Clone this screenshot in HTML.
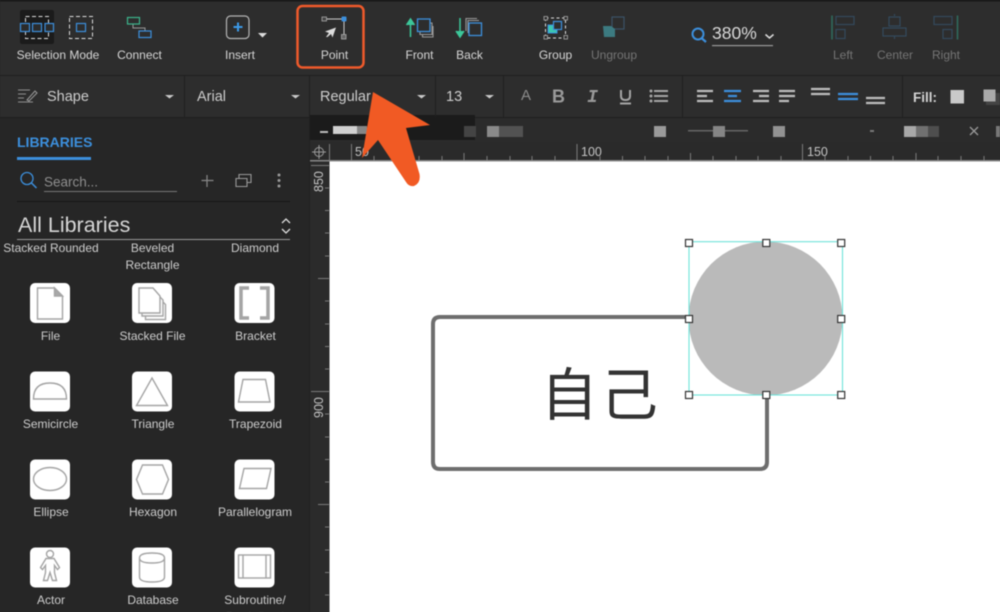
<!DOCTYPE html>
<html><head><meta charset="utf-8">
<style>
html,body{margin:0;padding:0;background:#262626}
#r{position:relative;width:1000px;height:612px;overflow:hidden;background:#262626;font-family:"Liberation Sans","Noto Sans CJK SC",sans-serif}
svg{position:absolute;left:0;top:0;filter:blur(.4px)}
svg text{font-family:"Liberation Sans","Noto Sans CJK SC",sans-serif}
.l{font-size:12px;fill:#cdcdcd;text-anchor:middle}
.t{font-size:12px;fill:#d6d6d6;text-anchor:middle}
.d{font-size:12px;fill:#757575;text-anchor:middle}
.f{font-size:14.5px;fill:#cdcdcd}
.ic{fill:#fff}
.sh{fill:none;stroke:#a4a4a4;stroke-width:1.4}
</style></head><body><div id="r">
<svg width="1012" height="624" viewBox="0 0 1012 624" xmlns="http://www.w3.org/2000/svg">
<!-- backgrounds -->
<rect width="1012" height="624" fill="#262626"/>
<rect width="1012" height="75" fill="#2d2d2d"/>
<rect width="1012" height="1.5" fill="#161616"/>
<rect y="75" width="1012" height="1" fill="#1f1f1f"/>
<rect y="76" width="1012" height="41" fill="#2d2d2d"/>
<rect y="117" width="1012" height="1" fill="#1f1f1f"/>
<rect x="310" y="118" width="702" height="24" fill="#2b2b2b"/>
<rect x="310" y="142" width="702" height="19" fill="#2a2a2a"/>
<rect x="310" y="161" width="19" height="463" fill="#2b2b2b"/>
<rect x="309" y="118" width="1" height="506" fill="#212121"/>
<!-- tab strip -->
<g>
<rect x="310" y="115" width="165" height="25" fill="#1b1b1b"/>
<rect x="333" y="126" width="24" height="8" fill="#d0d0d0"/><rect x="357" y="126" width="10" height="8" fill="#868686"/>
<rect x="320" y="131" width="8" height="2" fill="#bbb"/>
<rect x="464" y="126" width="12" height="11" fill="#444"/><rect x="487" y="126" width="12" height="11" fill="#8a8a8a"/><rect x="499" y="126" width="24" height="11" fill="#525252"/>
<rect x="654" y="126" width="12" height="11" fill="#9a9a9a"/>
<rect x="688" y="130" width="60" height="1.5" fill="#666"/>
<rect x="713" y="126" width="12" height="11" fill="#858585"/>
<rect x="773" y="126" width="12" height="11" fill="#929292"/>
<rect x="870" y="130" width="4" height="2" fill="#777"/>
<rect x="904" y="126" width="12" height="11" fill="#a8a8a8"/><rect x="916" y="126" width="12" height="11" fill="#707070"/><rect x="928" y="126" width="11" height="11" fill="#4e4e4e"/>
<path d="M970 127l8 8M978 127l-8 8" stroke="#999" stroke-width="1.300"/>
<rect x="996" y="126" width="4" height="11" fill="#777"/>
</g>
<!-- rulers -->
<g stroke="#7a7a7a" stroke-width="1" fill="none">
<path d="M329.500 144v16M351.500 144v16M577 144v16M802.500 144v16"/>
<path d="M374 156v4M396.500 156v4M419 156v4M442 156v4M464 153v7M487 156v4M510 156v4M532 156v4M555 156v4M600 156v4M622.500 156v4M645 156v4M668 156v4M690.500 153v7M713 156v4M736 156v4M758 156v4M781 156v4M825 156v4M848 156v4M870.500 156v4M893 156v4M916 153v7M938 156v4M961 156v4M984 156v4"/>
<path d="M311 165.500h18M318 278.500h11M311 391.500h18M318 504.500h11"/>
<path d="M325 188h4M325 210.500h4M325 233h4M325 256h4M325 301h4M325 324h4M325 346.500h4M325 369h4M325 414h4M325 437h4M325 459.500h4M325 482h4M325 527h4M325 550h4M325 572.500h4M325 595h4"/>
</g>
<rect x="310" y="160" width="702" height="1.500" fill="#888"/>
<g fill="none" stroke="#9a9a9a" stroke-width="1"><circle cx="319" cy="152" r="4.500"/><path d="M319 145v14M312 152h14"/></g>
<text x="355" y="156" font-size="12.500" fill="#c4c4c4">50</text>
<text x="581" y="156" font-size="12.500" fill="#c4c4c4">100</text>
<text x="807" y="156" font-size="12.500" fill="#c4c4c4">150</text>
<text transform="translate(323,192) rotate(-90)" font-size="12.500" fill="#c4c4c4">850</text>
<text transform="translate(323,418) rotate(-90)" font-size="12.500" fill="#c4c4c4">900</text>
<!-- canvas -->
<rect x="329.500" y="161.500" width="683" height="463" fill="#fff"/>
<path d="M690 317H440Q433 317 433 324V462Q433 469 440 469H760Q767 469 767 462V395" fill="none" stroke="#6e6e6e" stroke-width="4"/>
<text x="600.750" y="415" font-size="57" fill="#333" text-anchor="middle" style="font-family:'Noto Sans CJK SC',sans-serif;font-weight:400;letter-spacing:3px">自己</text>
<circle cx="765.500" cy="318.500" r="77" fill="#bababa"/>
<rect x="689" y="241.700" width="153.500" height="153.300" fill="none" stroke="#6fe3da" stroke-width="1.100"/>
<g fill="#fff" stroke="#333" stroke-width="1.200">
<rect x="685.500" y="239.500" width="7" height="7"/><rect x="762.800" y="239.500" width="7" height="7"/><rect x="837.700" y="239.500" width="7" height="7"/>
<rect x="685.500" y="315.500" width="7" height="7"/><rect x="837.700" y="315.500" width="7" height="7"/>
<rect x="685.500" y="391.500" width="7" height="7"/><rect x="762.800" y="391.500" width="7" height="7"/><rect x="837.700" y="391.500" width="7" height="7"/>
</g>
<!-- toolbar -->
<g>
<rect x="20" y="10" width="34" height="34" rx="2" fill="#1b1b1b"/>
<rect x="25.500" y="16.500" width="23" height="22" fill="none" stroke="#ddd" stroke-width="1" stroke-dasharray="4 2.500"/>
<g fill="#2b2b2b" stroke="#3c8fdc" stroke-width="1.200"><rect x="20.500" y="23.500" width="9" height="8"/><rect x="32.500" y="23.500" width="9" height="8"/><rect x="45" y="23.500" width="8.500" height="8"/></g>
<rect x="69.500" y="16.500" width="23" height="22" fill="none" stroke="#ddd" stroke-width="1" stroke-dasharray="4 2.500"/>
<rect x="76.500" y="23.500" width="9" height="8" fill="none" stroke="#3c8fdc" stroke-width="1.200"/>
<path d="M133 24v4h12v3" fill="none" stroke="#999" stroke-width="1"/>
<rect x="127.500" y="17.500" width="12" height="6.500" fill="none" stroke="#3cb58c" stroke-width="1.200"/>
<rect x="139" y="31" width="12" height="6.500" fill="none" stroke="#3c8fdc" stroke-width="1.200"/>
<rect x="226.500" y="16" width="22.500" height="22.500" rx="4" fill="none" stroke="#b5b5b5" stroke-width="1.200"/>
<path d="M238 22.500v9M233.500 27h9" stroke="#3c9ae8" stroke-width="2"/>
<path d="M258 33h9l-4.500 4.500z" fill="#ddd"/>
<path d="M325 19h19v18" fill="none" stroke="#ccc" stroke-width="1"/>
<rect x="322" y="17" width="4.500" height="4" fill="#444" stroke="#aaa" stroke-width=".8"/>
<rect x="341.500" y="16.500" width="5" height="5" rx="1" fill="#3c8fdc"/>
<rect x="341.500" y="34.500" width="4.500" height="4.500" fill="#666" stroke="#aaa" stroke-width=".8"/>
<path d="M336 27.500l-11 4 4 1.500-3 4 1.500 0 3.500-3 1.500 3.500z" fill="#ddd"/>
<rect x="297.500" y="6" width="66" height="61.500" rx="5" fill="none" stroke="#ef5a2b" stroke-width="2.500"/>
<path d="M410.500 37V21M406.500 25l4-6 4 6" fill="#3cc79a" stroke="#3cc79a" stroke-width="1.500"/>
<path d="M420 31.500v3h12V23h-2M422.500 34.500v2.500h10.500V26" fill="none" stroke="#9a9a9a" stroke-width="1.100"/>
<rect x="417.500" y="19" width="12.500" height="12.500" fill="none" stroke="#3c8fdc" stroke-width="1.300"/>
<path d="M460 18v15M456 31l4 6 4-6" fill="#3cc79a" stroke="#3cc79a" stroke-width="1.500"/>
<path d="M466 31v-12.500h11M468 33V20.500h11" fill="none" stroke="#9a9a9a" stroke-width="1.100"/>
<rect x="469" y="23" width="12.500" height="12.500" fill="#2d2d2d" stroke="#3c8fdc" stroke-width="1.300"/>
<rect x="545.500" y="18" width="20" height="20" fill="none" stroke="#ddd" stroke-width="1" stroke-dasharray="3 2.500"/>
<g fill="#2d2d2d" stroke="#aaa" stroke-width=".8"><rect x="544" y="16.500" width="3.500" height="3.500"/><rect x="564" y="16.500" width="3.500" height="3.500"/><rect x="544" y="35.500" width="3.500" height="3.500"/><rect x="564" y="35.500" width="3.500" height="3.500"/></g>
<rect x="548" y="25" width="9" height="8" fill="#3cc8b0" stroke="#3c8fdc" stroke-width="1"/>
<rect x="553.500" y="21.500" width="8" height="8" fill="#2d2d2d" stroke="#3c8fdc" stroke-width="1.200"/>
<rect x="612" y="17" width="12" height="12" fill="none" stroke="#3b5266" stroke-width="1.200"/>
<path d="M603 26l8 0 4 3 0 8-11 0z" fill="#3c7a80"/>
<circle cx="698" cy="34" r="5.500" fill="none" stroke="#3c8fdc" stroke-width="2"/><path d="M702 38.500l4 3.500" stroke="#3c8fdc" stroke-width="2.200"/>
<path d="M765.500 34.500l4 3.500 4-3.500" fill="none" stroke="#ddd" stroke-width="1.500"/>
<rect x="712" y="45" width="61" height="1.200" fill="#999"/>
<!-- align -->
<g fill="none" stroke="#33495c" stroke-width="1.200">
<rect x="836" y="16.500" width="18" height="8"/><rect x="836" y="29.500" width="9" height="9"/>
<rect x="883" y="28" width="23" height="8"/><rect x="889" y="17" width="11" height="9"/><path d="M894.500 14v2M894.500 36v3"/>
<rect x="934" y="16.500" width="18" height="8"/><rect x="943" y="29.500" width="9" height="9"/>
</g>
<path d="M832 15.500v24M957.500 15.500v24" stroke="#2f6a5c" stroke-width="1.600"/>
<!-- format icons -->
<path d="M18 90h12M18 94h8M18 98h6M18 102h15" stroke="#8f8f8f" stroke-width="1"/>
<path d="M27 100l8-9 2 2-8 8z" fill="none" stroke="#9a9a9a" stroke-width="1"/>
<g fill="#c9c9c9"><path d="M165 95h9l-4.500 3.500zM291 95h9l-4.500 3.500zM417 95h9l-4.500 3.500zM485 95h9l-4.500 3.500z"/></g>
<g fill="#1f1f1f"><rect x="184" y="76" width="1" height="41"/><rect x="309" y="76" width="1" height="41"/><rect x="435" y="76" width="1" height="41"/><rect x="503" y="76" width="1" height="41"/><rect x="682" y="76" width="1" height="41"/><rect x="902" y="76" width="1" height="41"/></g>
<g stroke="#bdbdbd" stroke-width="2.200" fill="none">
<path d="M697 91h16M697 96h10M697 101h16"/>
<path d="M753 91h16M759 96h10M753 101h16"/>
<path d="M779 91h16M779 96h16M779 101h10"/>
<path d="M811 89h19M811 94h19"/>
<path d="M866 98h19M866 103h19"/>
</g>
<g stroke="#3c8fdc" stroke-width="2.200" fill="none">
<path d="M724 91h17M728 96h9M724 101h17"/>
<path d="M838 94h20M838 99h20"/>
</g>
<g fill="none" stroke="#a5a5a5" stroke-width="2">
<path d="M621 90v6q0 4 4.500 4t4.500-4v-6M620 103.500h11"/>
<path d="M654 91h14M654 96h14M654 101h14"/>
</g>
<g fill="#a5a5a5"><circle cx="651" cy="91" r="1.500"/><circle cx="651" cy="96" r="1.500"/><circle cx="651" cy="101" r="1.500"/></g>
<rect x="950.500" y="90" width="13.500" height="13.500" fill="#c9c9c9"/>
<rect x="986" y="93" width="14" height="12" fill="#444"/>
<rect x="983.500" y="89.500" width="12" height="12" fill="#aaa"/>
</g>
<g>
<text class="t" x="58" y="59">Selection Mode</text>
<text class="t" x="139.500" y="59">Connect</text>
<text class="t" x="240" y="59">Insert</text>
<text class="t" x="334.500" y="59">Point</text>
<text class="t" x="419.500" y="59">Front</text>
<text class="t" x="469.500" y="59">Back</text>
<text class="t" x="555.500" y="59">Group</text>
<text class="d" x="614" y="59">Ungroup</text>
<text class="d" x="843" y="59">Left</text>
<text class="d" x="895" y="59">Center</text>
<text class="d" x="946" y="59">Right</text>
<text x="712" y="39" font-size="17.500" fill="#d8d8d8">380%</text>
<text class="f" x="47" y="101">Shape</text>
<text class="f" x="197" y="101">Arial</text>
<text class="f" x="320" y="101">Regular</text>
<text class="f" x="446" y="101">13</text>
<text x="526" y="100" font-size="15" fill="#8c8c8c" text-anchor="middle">A</text>
<text x="558.500" y="102.500" font-size="18" font-weight="700" fill="#9a9a9a" text-anchor="middle">B</text>
<text x="592.500" y="102" font-size="18" font-style="italic" font-weight="700" fill="#9a9a9a" text-anchor="middle" style="font-family:'Liberation Mono',monospace">I</text>
<text x="913" y="102" font-size="13.500" font-weight="700" fill="#d4d4d4">Fill:</text>
</g>
<!-- sidebar -->
<text x="17" y="147" font-size="14" font-weight="700" fill="#3c8fdc">LIBRARIES</text>
<rect x="17" y="157" width="74" height="3" fill="#3c8fdc"/>
<g>
<circle cx="27" cy="178.500" r="6" fill="none" stroke="#3c8fdc" stroke-width="1.300"/><path d="M31.500 183l5 5" stroke="#3c8fdc" stroke-width="1.500"/>
<rect x="44" y="191" width="133" height="1" fill="#777"/>
<path d="M207 175v12M201.500 180.500h12" stroke="#888" stroke-width="1.200"/>
<path d="M236 178.500h11v8h-11zM239 178v-3.500h12v8h-3.500" fill="none" stroke="#999" stroke-width="1.100"/>
<g fill="#999"><circle cx="279" cy="175" r="1.500"/><circle cx="279" cy="180.500" r="1.500"/><circle cx="279" cy="186" r="1.500"/></g>
<rect x="17" y="201" width="273" height="1" fill="#161616"/>
<rect x="17" y="239" width="273" height="1" fill="#999"/>
<path d="M282 223l4-4 4 4M282 229l4 4 4-4" fill="none" stroke="#ddd" stroke-width="1.300"/>
</g>
<text x="44" y="186.500" font-size="13.500" fill="#8e8e8e">Search...</text>
<text x="18" y="232" font-size="21.500" fill="#d6d6d6">All Libraries</text>
<g>
<text class="l" x="51" y="252">Stacked Rounded</text>
<text class="l" x="152.500" y="252">Beveled</text>
<text class="l" x="152.500" y="269">Rectangle</text>
<text class="l" x="255" y="252">Diamond</text>
<text class="l" x="50.500" y="340">File</text>
<text class="l" x="152.500" y="340">Stacked File</text>
<text class="l" x="255.500" y="340">Bracket</text>
<text class="l" x="50.500" y="428">Semicircle</text>
<text class="l" x="153" y="428">Triangle</text>
<text class="l" x="255.500" y="428">Trapezoid</text>
<text class="l" x="51" y="516">Ellipse</text>
<text class="l" x="153" y="516">Hexagon</text>
<text class="l" x="255" y="516">Parallelogram</text>
<text class="l" x="51" y="604">Actor</text>
<text class="l" x="153" y="604">Database</text>
<text class="l" x="255" y="604">Subroutine/</text>
<text class="l" x="255" y="621">Predefined</text>
</g>
<g>
<g class="ic">
<rect x="30" y="283" width="40" height="40" rx="5"/><rect x="132" y="283" width="40" height="40" rx="5"/><rect x="234.500" y="283" width="40" height="40" rx="5"/>
<rect x="30" y="371.500" width="40" height="40" rx="5"/><rect x="132" y="371.500" width="40" height="40" rx="5"/><rect x="234.500" y="371.500" width="40" height="40" rx="5"/>
<rect x="30" y="459.500" width="40" height="40" rx="5"/><rect x="132" y="459.500" width="40" height="40" rx="5"/><rect x="234.500" y="459.500" width="40" height="40" rx="5"/>
<rect x="30" y="547.500" width="40" height="40" rx="5"/><rect x="132" y="547.500" width="40" height="40" rx="5"/><rect x="234.500" y="547.500" width="40" height="40" rx="5"/>
</g>
<g class="sh">
<path d="M37.500 288h17l8 8v23h-25z"/><path d="M54.500 288l8 8h-8z" fill="#a8a8a8"/>
<path d="M139 288h14l7 8v17h-21z"/><path d="M160 297l3 3v16h-21v-3M163 302l2.500 2.500v15h-20v-3"/>
<path d="M249 288h-8v30h8M260 288h8v30h-8" stroke-width="3.500"/>
<path d="M33.500 399h33q0-16-16.500-16t-16.500 16z"/>
<path d="M152 378l15.500 27.500h-31z"/>
<path d="M243 379.500h22.500l4.500 22.500h-31.500z"/>
<ellipse cx="50" cy="479" rx="16.500" ry="11.500"/>
<path d="M142.500 465h20l6 14.500-6 14.500h-20l-6-14.500z"/>
<path d="M244 468.500h27l-4.500 20h-27z"/>
<circle cx="50" cy="554" r="3.500"/>
<path d="M46 558.500h8l5.500 9-2 2-3-4v7l2 8h-4l-2.500-8-2.500 8h-4l2-8v-7l-3 4-2-2z"/>
<path d="M139.500 558v19q0 5 12.500 5t12.500-5v-19M139.500 558q0-5 12.500-5t12.500 5-12.500 5-12.500-5z"/>
<rect x="238.500" y="555" width="32" height="23"/><path d="M243 555v23M266 555v23"/>
</g>
</g>
<!-- big arrow -->
<path d="M373 92L430 125L406 128L419.500 174Q421 183 414 186Q409 187 406 182L378 140L362 158Z" fill="#f15a24"/>
</svg>
</div></body></html>
